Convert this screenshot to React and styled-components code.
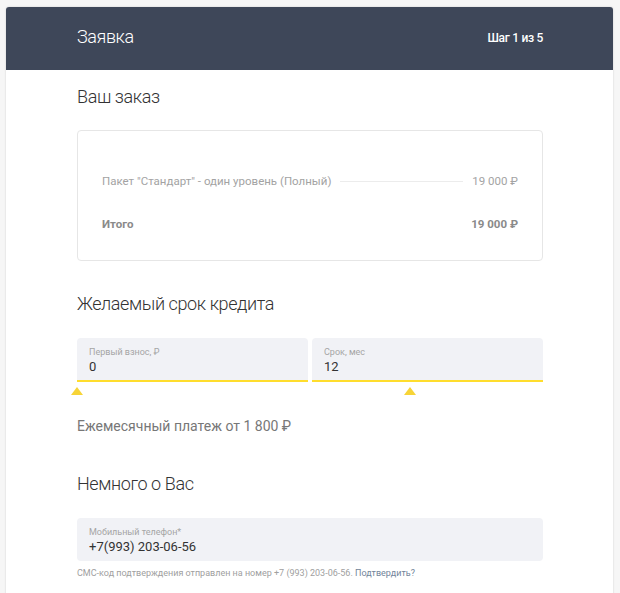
import React from "react";
import styled, { createGlobalStyle } from "styled-components";

const Global = createGlobalStyle`
  html, body { margin: 0; padding: 0; background: #f6f6f6; }
  body { font-family: Roboto, "Noto Sans", sans-serif; -webkit-font-smoothing: antialiased; }
  * { box-sizing: border-box; }
`;

const Page = styled.div`
  padding: 7px 7px 0 6px;
  height: 593px;
  overflow: hidden;
`;

const Card = styled.div`
  background: #fff;
  border-radius: 3px 3px 0 0;
  box-shadow: 0 0 2px rgba(0, 0, 0, 0.18);
  min-height: 620px;
`;

const Header = styled.header`
  height: 63px;
  background: #3e4759;
  border-radius: 3px 3px 0 0;
  display: flex;
  align-items: center;
  justify-content: space-between;
  padding: 0 70px 0 71px;
  color: #fff;
`;

const Title = styled.h1`
  margin: 0 0 4px;
  font-size: 18px;
  font-weight: 300;
  letter-spacing: -0.4px;
`;

const Step = styled.span`
  font-size: 12px;
  font-weight: 500;
  letter-spacing: -0.3px;
  margin-bottom: 2px;
`;

const Body = styled.main`
  padding: 15px 70px 0 71px;
  display: flex;
  flex-direction: column;
`;

const SectionTitle = styled.h2`
  margin: 0;
  font-size: 18px;
  line-height: 24px;
  font-weight: 300;
  letter-spacing: -0.4px;
  color: #333;
  margin-top: ${(p) => p.$top || 0}px;
`;

const OrderBox = styled.div`
  margin-top: 21px;
  border: 1px solid #e6e6e6;
  border-radius: 4px;
  padding: 42px 24px 28px 24px;
  display: flex;
  flex-direction: column;
  gap: 27px;
`;

const OrderRow = styled.div`
  display: flex;
  align-items: center;
  gap: 9px;
  font-size: 11.5px;
  line-height: 16px;
  color: ${(p) => (p.$total ? "#8a8a8a" : "#a3a3a3")};
  font-weight: ${(p) => (p.$total ? 700 : 400)};
`;

const Leader = styled.span`
  flex: 1;
  height: 1px;
  background: #ececec;
  margin: 1px 0 0;
`;

const Spacer = styled.span`
  flex: 1;
`;

const FieldRow = styled.div`
  margin-top: 22px;
  display: grid;
  grid-template-columns: 1fr 1fr;
  gap: 4px;
`;

const FieldCol = styled.div`
  position: relative;
  padding-bottom: 13px;
`;

const Field = styled.div`
  background: #f1f2f6;
  border-bottom: ${(p) => (p.$slider ? "2px solid #ffdd2d" : "none")};
  border-radius: ${(p) => (p.$slider ? "4px 4px 0 0" : "4px")};
  height: ${(p) => (p.$slider ? 44 : 43)}px;
  padding: 8px 12px 0;
  display: flex;
  flex-direction: column;
`;

const Label = styled.span`
  font-size: 9px;
  line-height: 12px;
  color: #a5a5a5;
`;

const Value = styled.span`
  font-size: 13px;
  line-height: 17px;
  color: #333;
`;

const Thumb = styled.span`
  position: absolute;
  top: 49px;
  width: 0;
  height: 0;
  margin-left: -6px;
  border-left: 6px solid transparent;
  border-right: 6px solid transparent;
  border-bottom: 8px solid #f7d437;
`;

const Monthly = styled.p`
  margin: 21px 0 0;
  font-size: 14px;
  line-height: 20px;
  color: #777;
`;

const PhoneField = styled(Field)`
  margin-top: 22px;
`;

const Hint = styled.p`
  margin: 6px 0 0;
  font-size: 9px;
  line-height: 12px;
  color: #a0a0a0;
`;

const HintLink = styled.a`
  color: #71849a;
  text-decoration: none;
`;

const sliders = [
  { label: "Первый взнос, ₽", value: "0", pos: 0 },
  { label: "Срок, мес", value: "12", pos: 42.4 },
];

export default function App() {
  return (
    <>
      <Global />
      <Page>
        <Card>
          <Header>
            <Title>Заявка</Title>
            <Step>Шаг 1 из 5</Step>
          </Header>
          <Body>
            <SectionTitle>Ваш заказ</SectionTitle>
            <OrderBox>
              <OrderRow>
                <span>Пакет "Стандарт" - один уровень (Полный)</span>
                <Leader />
                <span>19 000 ₽</span>
              </OrderRow>
              <OrderRow $total>
                <span>Итого</span>
                <Spacer />
                <span>19 000 ₽</span>
              </OrderRow>
            </OrderBox>

            <SectionTitle $top={31}>Желаемый срок кредита</SectionTitle>
            <FieldRow>
              {sliders.map((s) => (
                <FieldCol key={s.label}>
                  <Field $slider>
                    <Label>{s.label}</Label>
                    <Value>{s.value}</Value>
                  </Field>
                  <Thumb style={{ left: `${s.pos}%` }} />
                </FieldCol>
              ))}
            </FieldRow>
            <Monthly>Ежемесячный платеж от 1 800 ₽</Monthly>

            <SectionTitle $top={36}>Немного о Вас</SectionTitle>
            <PhoneField>
              <Label>Мобильный телефон*</Label>
              <Value>+7(993) 203-06-56</Value>
            </PhoneField>
            <Hint>
              СМС-код подтверждения отправлен на номер +7 (993) 203-06-56.{" "}
              <HintLink href="#">Подтвердить?</HintLink>
            </Hint>
          </Body>
        </Card>
      </Page>
    </>
  );
}
